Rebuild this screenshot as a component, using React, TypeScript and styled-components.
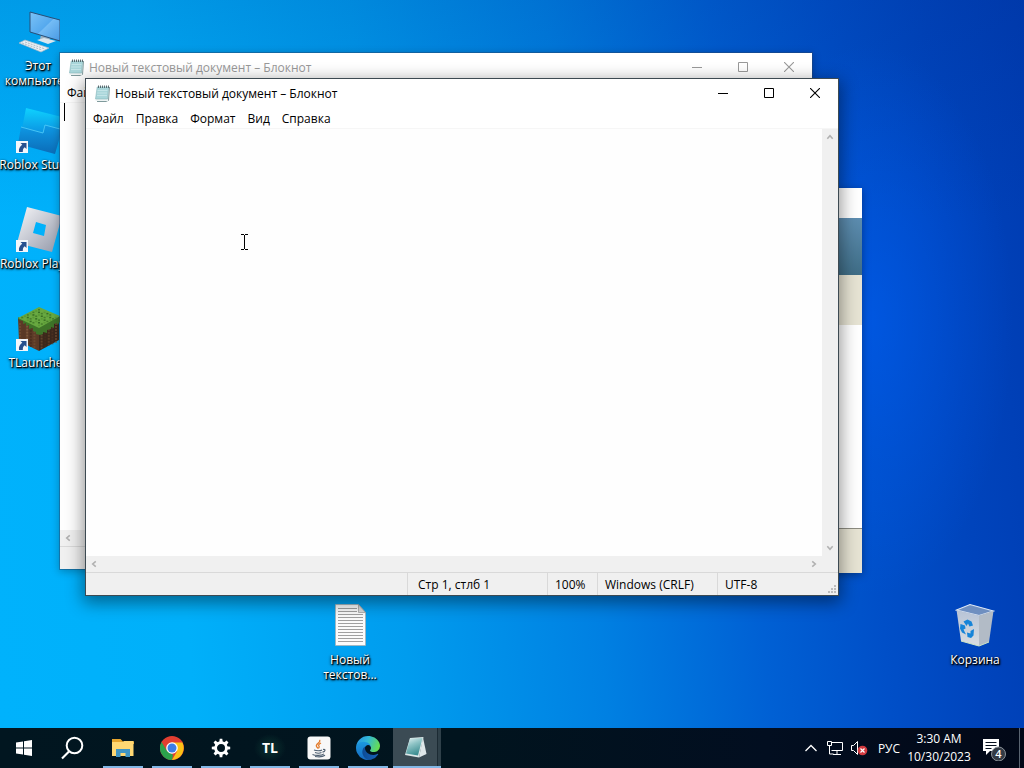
import React from "react";
import styled, { createGlobalStyle, css } from "styled-components";

const GlobalStyle = createGlobalStyle`
  *, *::before, *::after { box-sizing: border-box; }
  html, body { margin: 0; padding: 0; overflow: hidden; }
  body, button, textarea {
    font-family: "Open Sans", "Noto Sans", sans-serif;
    font-size: 12px;
  }
  button { margin: 0; padding: 0; border: 0; background: none; color: inherit; cursor: default; }
  svg { display: block; flex: none; }
`;

const Screen = styled.div`
  display: flex;
  flex-direction: column;
  height: 100vh;
  background: #0047b8;
`;

const Desktop = styled.main`
  position: relative;
  flex: 1;
  min-height: 0;
  overflow: hidden;
  background:
    radial-gradient(ellipse 14% 38% at 85% 44%, rgba(0, 98, 255, 0.45), rgba(0, 98, 255, 0) 100%),
    linear-gradient(to bottom, rgba(0, 40, 130, 0.16), rgba(0, 40, 130, 0) 30%),
    linear-gradient(85deg, #00b2fc 0%, #00b0fa 18%, #009cee 38%, #0080e2 56%, #0060d4 71%, #004fc8 82%, #0044bc 91%, #003cb2 100%);
`;

const iconShadow = css`
  text-shadow: 1px 1px 1px #000, 1px 1px 2px #000, 0 1px 3px rgba(0, 0, 0, 0.9);
`;

const Shortcut = styled.button<{ $x: number; $y: number }>`
  position: absolute;
  left: ${(p) => p.$x}px;
  top: ${(p) => p.$y}px;
  width: 74px;
  display: flex;
  flex-direction: column;
  align-items: center;
  gap: 3px;
  color: #fff;
  line-height: 15px;
  text-align: center;
  white-space: nowrap;
  ${iconShadow}
`;

const WindowFrame = styled.section<{ $x: number; $y: number; $active: boolean }>`
  position: absolute;
  left: ${(p) => p.$x}px;
  top: ${(p) => p.$y}px;
  width: 754px;
  height: 518px;
  display: flex;
  flex-direction: column;
  background: #fff;
  background-clip: padding-box;
  border: 1px solid ${(p) => (p.$active ? "#3d4a52" : "rgba(40, 70, 110, 0.45)")};
  box-shadow: ${(p) =>
    p.$active ? "0 5px 16px 2px rgba(0, 0, 0, 0.42)" : "0 2px 8px rgba(0, 0, 0, 0.25)"};
`;

const TitleBar = styled.header<{ $active: boolean }>`
  display: flex;
  align-items: center;
  height: 30px;
  padding-left: 8px;
  color: ${(p) => (p.$active ? "#000" : "#999")};
`;

const Title = styled.h1`
  flex: 1;
  margin: 0;
  padding-left: 4px;
  font-size: 12px;
  font-weight: 400;
  line-height: 16px;
  white-space: nowrap;
`;

const CaptionButton = styled.button`
  align-self: flex-start;
  width: 46px;
  height: 28px;
  display: flex;
  align-items: center;
  justify-content: center;
`;

const MenuBar = styled.nav`
  display: flex;
  height: 20px;
  padding-left: 1px;
  border-bottom: 1px solid #f6f6f6;
`;

const MenuItem = styled.button`
  padding: 0 6px;
  line-height: 19px;
  color: #000;
`;

const Editor = styled.div`
  flex: 1;
  display: flex;
  min-height: 0;
  position: relative;
`;

const TextBox = styled.textarea`
  flex: 1;
  min-width: 0;
  border: 0;
  outline: 0;
  resize: none;
  padding: 4px;
  background: #fefefe;
`;

const Caret = styled.span`
  position: absolute;
  left: 4px;
  top: 0;
  width: 1px;
  height: 18px;
  background: #000;
`;

const VerticalBar = styled.div`
  width: 16px;
  display: flex;
  flex-direction: column;
  justify-content: space-between;
  background: #f0f0f0;
`;

const HorizontalBar = styled.div`
  height: 16px;
  padding-right: 16px;
  display: flex;
  justify-content: space-between;
  background: #f0f0f0;
`;

const ScrollButton = styled.button`
  width: 16px;
  height: 16px;
  display: flex;
  align-items: center;
  justify-content: center;
`;

const StatusBar = styled.footer`
  display: flex;
  align-items: stretch;
  justify-content: flex-end;
  height: 23px;
  border-top: 1px solid #d9d9d9;
  background: #f0f0f0;
  position: relative;
`;

const StatusCell = styled.span<{ $width: number; $pad?: number }>`
  width: ${(p) => p.$width}px;
  padding-left: ${(p) => p.$pad ?? 7}px;
  border-left: 1px solid #d9d9d9;
  line-height: 23px;
  white-space: nowrap;
`;

const Grip = styled.svg`
  position: absolute;
  right: 1px;
  bottom: 1px;
`;

const InstallerFrame = styled.section`
  position: absolute;
  left: 362px;
  top: 188px;
  width: 500px;
  height: 385px;
  display: flex;
  flex-direction: column;
  background: #fff;
  box-shadow: 0 2px 8px rgba(0, 0, 0, 0.35);
`;

const InstallerTitle = styled.div`
  height: 30px;
`;
const InstallerBanner = styled.div`
  height: 57px;
  background: linear-gradient(to bottom, #5d8db0, #3f6d86);
`;
const InstallerHeading = styled.div`
  height: 50px;
  background: #e6e3d3;
`;
const InstallerBody = styled.div`
  flex: 1;
`;
const InstallerFooter = styled.div`
  height: 45px;
  border-top: 1px solid #8c8b80;
  background: #e6e3d3;
`;

const Pointer = styled.svg`
  position: absolute;
  left: 240px;
  top: 234px;
`;

const Taskbar = styled.footer`
  display: flex;
  height: 40px;
  background: linear-gradient(to right, #011620 0%, #01141e 45%, #020e20 75%, #020817 100%);
  color: #fff;
`;

const SystemButton = styled.button`
  width: 48px;
  display: flex;
  align-items: center;
  justify-content: center;
`;

const TaskList = styled.div`
  display: flex;
  gap: 1px;
  margin-left: 3px;
`;

const TaskButton = styled.button<{ $active?: boolean }>`
  width: 48px;
  display: flex;
  align-items: center;
  justify-content: center;
  background: ${(p) => (p.$active ? "#3b4b54" : "transparent")};
  position: relative;
  &::after {
    content: "";
    position: absolute;
    left: ${(p) => (p.$active ? 0 : 4)}px;
    right: ${(p) => (p.$active ? 0 : 4)}px;
    bottom: 0;
    height: 2px;
    background: #82b7e6;
  }
`;

const StackEdge = styled.span`
  position: absolute;
  right: 0;
  top: 0;
  bottom: 0;
  width: 4px;
  border-left: 1px solid #1c2b34;
  background: #2f4049;
`;

const Tray = styled.div`
  display: flex;
  align-items: center;
  margin-left: auto;
`;

const TrayButton = styled.button<{ $width: number }>`
  width: ${(p) => p.$width}px;
  height: 40px;
  display: flex;
  align-items: center;
  justify-content: center;
`;

const NoticeButton = styled(TrayButton)`
  justify-content: flex-start;
  padding-left: 8px;
`;

const Clock = styled.button`
  width: 68px;
  height: 40px;
  line-height: 18px;
  text-align: center;
  white-space: nowrap;
`;

const TrayEdge = styled.span`
  width: 5px;
  height: 40px;
  border-left: 1px solid #5a6470;
`;

const NotepadGlyph = () => (
  <svg width="17" height="18" viewBox="0 0 17 18">
    <path d="M4 2h12l-1 13.500-3 1.500H3z" fill="#7f9a9c" />
    <path d="M3.500 2h11.500l-1 14H1.500z" fill="#eef4f4" />
    <path d="M3.200 2h11.500l-1.200 12H1.500z" fill="#a9d6da" stroke="#86b6bb" strokeWidth=".6" />
    <path d="M3.500 5.500h10M3.200 8h10M3 10.500h10" stroke="#cbe9eb" strokeWidth=".8" />
    <path d="M4.500 .5v2.500M6.500 .5v2.500M8.500 .5v2.500M10.500 .5v2.500M12.500 .5v2.500M14.500 .5v2.500" stroke="#4e5f64" strokeWidth=".9" />
  </svg>
);

const Arrow = ({ turn }: { turn: number }) => (
  <svg width="8" height="8" viewBox="0 0 9 9">
    <path d="M1.500 6.500 4.500 3l3 3.500" fill="none" stroke="#b0b0b0" strokeWidth="1.700" transform={`rotate(${turn} 4.500 4.500)`} />
  </svg>
);

const ShortcutMark = () => (
  <g>
    <rect x="0" y="33" width="12" height="12" fill="#f3f7fb" />
    <path d="M4.500 35h6v6L8.700 39.200C7 40.500 6.800 41.500 6.800 44H3C2.500 40.500 4 38.500 6.300 36.800z" fill="#27518f" />
  </g>
);

const ComputerIcon = () => (
  <svg width="44" height="46" viewBox="0 0 44 46">
    <defs>
      <linearGradient id="pcScreen" x1="0" y1="0" x2="1" y2="1">
        <stop offset="0" stopColor="#7cc3f7" />
        <stop offset=".5" stopColor="#55a9ee" />
        <stop offset=".52" stopColor="#74bcf5" />
        <stop offset="1" stopColor="#4799e4" />
      </linearGradient>
    </defs>
    <path d="M25 26l9 3-1 4-9-3z" fill="#9eb2c2" />
    <path d="M21 31l7-2 12 3-8 3z" fill="#dbe6ee" />
    <path d="M14 3l30 8v21L14 23z" fill="url(#pcScreen)" stroke="#284e76" strokeWidth="1" />
    <path d="M3 34l6-3 24 8-8 4z" fill="#e9eff4" stroke="#a7b7c5" strokeWidth=".7" />
    <path d="M6 34l20 7M9 33l20 7" stroke="#a1adba" strokeWidth=".8" strokeDasharray="2 1" />
  </svg>
);

const StudioIcon = () => (
  <svg width="44" height="46" viewBox="0 0 44 46">
    <defs>
      <linearGradient id="studio" x1="0" y1="0" x2="0" y2="1">
        <stop offset="0" stopColor="#0fd2ff" />
        <stop offset="1" stopColor="#0a8fe0" />
      </linearGradient>
      <linearGradient id="studioLow" x1="0" y1="0" x2="0" y2="1">
        <stop offset="0" stopColor="#0f9ae6" />
        <stop offset="1" stopColor="#0b6cb8" />
      </linearGradient>
    </defs>
    <path d="M10 0l40 10-3 13-17-4-2 8-22-6z" fill="url(#studio)" />
    <path d="M5 19l22 6 2-8 17 5-7 24L2 36z" fill="url(#studioLow)" />
    <path d="M5 19l22 6 2-8 15 4" fill="none" stroke="#4cc8f7" strokeWidth=".9" />
    <ShortcutMark />
  </svg>
);

const PlayerIcon = () => (
  <svg width="44" height="46" viewBox="0 0 44 46">
    <defs>
      <linearGradient id="player" x1="0" y1="0" x2="1" y2="1">
        <stop offset="0" stopColor="#f7f7f9" />
        <stop offset=".5" stopColor="#c3c6d0" />
        <stop offset="1" stopColor="#8f95a6" />
      </linearGradient>
    </defs>
    <path fillRule="evenodd" d="M11 0L46 9 36 45 1 36zM20 15l-3 11 11 3 2-11z" fill="url(#player)" />
    <ShortcutMark />
  </svg>
);

const greens = ["#477d2b", "#6ba944", "#5b9736", "#386d23"];
const browns = ["#6e4930", "#4b2e1f", "#805a3d", "#593926"];

const GrassIcon = () => (
  <svg width="44" height="46" viewBox="0 0 44 46">
    <path d="M2 12l21 8v25L3 35z" fill="#5b3a27" />
    <path d="M23 20l20-8v22L23 45z" fill="#3c281c" />
    {Array.from({ length: 77 }, (_, i) => {
      const c = i % 11;
      const r = Math.floor(i / 11);
      const slope = c < 6 ? c * 1.300 : (10 - c) * 1.400;
      return <rect key={i} x={3 + c * 3.600} y={17 + slope + r * 3} width="2" height="2" fill={browns[(i * 7 + r * 3) % 4]} opacity={c < 6 ? 0.9 : 0.55} />;
    })}
    <path d="M2 11l21 9 21-10v6l-3 3v-2l-3 1v4l-3-1v2l-4 1v3l-4-1v2l-3 1-4-1v-2l-3-1v-3l-4 1v-4l-3 1v-3l-3 1v-3l-4-1z" fill="#3e7428" />
    <path d="M23 1l21 9-21 12L2 12z" fill="#66a83f" />
    {Array.from({ length: 49 }, (_, i) => {
      const c = i % 7;
      const r = Math.floor(i / 7);
      return <rect key={i} x={22 + (c - r) * 2.800} y={3 + (c + r) * 1.300} width="2" height="1.500" fill={greens[(i * 5 + r * 3) % 4]} />;
    })}
    <ShortcutMark />
  </svg>
);

const TextFileIcon = () => (
  <svg width="44" height="46" viewBox="0 0 44 46">
    <path d="M7.500 1.500h23l7 8v33h-30z" fill="#fbfbfb" stroke="#adadad" strokeWidth=".7" />
    <path d="M30.500 1.500v8h7z" fill="#d9d9d9" stroke="#999" strokeWidth=".7" />
    <path d="M10 5.500h19M10 8.500h19M10 11.500h25M10 14.500h25M10 17.500h25M10 20.500h25M10 23.500h25M10 26.500h25M10 29.500h25M10 32.500h25M10 35.500h25M10 38.500h25" stroke="#a0a0a0" />
  </svg>
);

const BinIcon = () => (
  <svg width="44" height="46" viewBox="0 0 44 46">
    <defs>
      <linearGradient id="binFront" x1="0" y1="0" x2="0" y2="1">
        <stop offset="0" stopColor="#b7c3d6" />
        <stop offset="1" stopColor="#d9dde1" />
      </linearGradient>
    </defs>
    <path d="M3.500 7L17 1.500 40.500 8 26 12.500z" fill="#6f8fc0" stroke="#dfe9f6" strokeWidth="1.100" />
    <path d="M3.500 7L26 12.500 26 43 8 38z" fill="url(#binFront)" />
    <path d="M26 12.500L40.500 8 36 39 26 43z" fill="#b2bbc6" />
    <path d="M8 38l18 5 10-4" fill="none" stroke="#cfe6c4" />
    <g fill="#1684d8">
      <path d="M10.500 18.500l4-2 4 2 1.500 4-3.500 1-1.500-3-1.500 2.500z" />
      <path d="M7.500 21l4.500 1.500.5 3-2 1 2.500 5-4-2-2-4z" />
      <path d="M14 29.500l3.500 1v-2.500l3.500-2-.5 6.500-2.500 2.500-3.500-1z" />
    </g>
  </svg>
);

const StartIcon = () => (
  <svg width="16" height="16" viewBox="0 0 16 16">
    <path d="M0 2.500l7-1v6.100H0zM8 1.300L16 0v7.600H8zM0 8.500h7v6l-7-1zM8 8.500h8V16l-8-1.200z" fill="#fff" />
  </svg>
);

const SearchIcon = () => (
  <svg width="24" height="24" viewBox="0 0 24 24">
    <circle cx="14.500" cy="9.500" r="7.800" fill="none" stroke="#fff" strokeWidth="2" />
    <path d="M9 15.500L2 22.500" stroke="#fff" strokeWidth="2.200" />
  </svg>
);

const ExplorerIcon = () => (
  <svg width="24" height="24" viewBox="0 0 24 24">
    <path d="M1 3h8.500l2.500 2.500h11V8H1z" fill="#e6a52e" />
    <path d="M1 6h11l1-1h9.500v15H1z" fill="#ffd873" />
    <path d="M5 13h14v8h-4.500v-4h-5v4H5z" fill="#4095c4" />
  </svg>
);

const ChromeIcon = () => (
  <svg width="24" height="24" viewBox="0 0 24 24">
    <circle cx="12" cy="12" r="12" fill="#e13e31" />
    <path d="M12 24A12 12 0 0 1 1.600 6L7 15l5 3 1 1z" fill="#2ba24c" />
    <path d="M12 24A12 12 0 0 0 22.400 6.600H12l5.200 8.400z" fill="#fbc116" />
    <circle cx="12" cy="12" r="5.800" fill="#fff" />
    <circle cx="12" cy="12" r="4.500" fill="#3c7de6" />
  </svg>
);

const SettingsIcon = () => (
  <svg width="20" height="20" viewBox="0 0 20 20">
    <circle cx="10" cy="10" r="5.400" fill="none" stroke="#fff" strokeWidth="2.800" />
    {[0, 45, 90, 135, 180, 225, 270, 315].map((a) => (
      <path key={a} d="M8.200 4.500L8.700 .8h2.600l.5 3.700z" fill="#fff" transform={`rotate(${a} 10 10)`} />
    ))}
  </svg>
);

const LauncherIcon = styled.span`
  width: 32px;
  height: 28px;
  background: radial-gradient(closest-side, #0a3330, rgba(8, 43, 43, 0));
  font-size: 14px;
  font-weight: 700;
  line-height: 28px;
  text-align: center;
`;

const JavaIcon = () => (
  <svg width="24" height="24" viewBox="0 0 24 24">
    <rect x=".5" y=".5" width="23" height="23" rx="3" fill="#f8f8f8" />
    <path d="M12.500 4c2 2.500-4.500 4-3 6.500.4 1 1.500 1.600 1.800 2M14 7c-2 1-3 2-2 3.200.7 1 0 1.500-.5 2" fill="none" stroke="#e37b2c" strokeWidth="1.300" />
    <path d="M7 14c2.500 1 6.500 1 8 0M8 16.500c2 .8 5 .8 6.500 0M16 13.500c3-.8 2.500 2-.5 2.600M5.500 18.500c3 1.300 9 1.300 11.500-.6M8 20.500c4 .7 8 .3 10-1.200" fill="none" stroke="#4f6072" strokeWidth="1.100" />
  </svg>
);

const EdgeIcon = () => (
  <svg width="24" height="24" viewBox="0 0 256 256">
    <defs>
      <linearGradient id="edgeTop" x1="0" y1=".2" x2="1" y2=".5">
        <stop offset="0" stopColor="#2793e4" />
        <stop offset=".45" stopColor="#31b8d8" />
        <stop offset="1" stopColor="#66dd52" />
      </linearGradient>
      <linearGradient id="edgeBody" x1="0" y1="0" x2="0" y2="1">
        <stop offset="0" stopColor="#1b9de2" />
        <stop offset="1" stopColor="#1668bf" />
      </linearGradient>
      <linearGradient id="edgeLow" x1="0" y1="0" x2="1" y2="0">
        <stop offset="0" stopColor="#0c4a93" />
        <stop offset="1" stopColor="#1762bb" />
      </linearGradient>
    </defs>
    <g transform="translate(-4.630 -4.920)">
      <path d="M235.680 195.460a93.730 93.730 0 0 1-10.540 4.710 101.870 101.870 0 0 1-35.900 6.460c-47.320 0-88.540-32.550-88.540-74.320A31.480 31.480 0 0 1 117.130 105c-42.800 1.800-53.800 46.400-53.800 72.530 0 73.880 68.090 81.370 82.760 81.370 7.910 0 19.840-2.300 27-4.560l1.310-.44a128.340 128.340 0 0 0 66.600-52.800 4 4 0 0 0-5.320-5.640Z" fill="url(#edgeLow)" />
      <path d="M110.340 246.340A79.200 79.200 0 0 1 87.600 225a80.720 80.720 0 0 1 29.530-120c3.120-1.470 8.450-4.130 15.540-4a32.350 32.350 0 0 1 25.690 13 31.880 31.880 0 0 1 6.360 18.660c0-.21 24.460-79.600-80-79.600-43.900 0-80 41.660-80 78.210a130.150 130.150 0 0 0 12.110 56 128 128 0 0 0 156.380 67.110 75.550 75.550 0 0 1-62.780-8Z" fill="url(#edgeBody)" />
    </g>
    <path d="M152.330 148.860c-.81 1.050-3.300 2.500-3.300 5.660 0 2.610 1.700 5.120 4.720 7.230 14.380 10 41.490 8.680 41.560 8.680a59.560 59.560 0 0 0 30.270-8.350A61.380 61.380 0 0 0 256 109.170c.26-22.410-8-37.310-11.340-43.910C223.460 23.840 177.720 0 128 0A128 128 0 0 0 0 126.200c.48-36.540 36.800-66.050 80-66.050 3.500 0 23.460.34 42 10.070 16.340 8.580 24.900 18.940 30.850 29.210 6.180 10.670 7.280 24.150 7.280 29.520s-2.740 13.330-7.800 19.910Z" fill="url(#edgeTop)" />
  </svg>
);

const TaskNotepadIcon = () => (
  <svg width="24" height="24" viewBox="0 0 24 24">
    <defs>
      <linearGradient id="noteTask" x1="0" y1="0" x2=".4" y2="1">
        <stop offset="0" stopColor="#e3f2f2" />
        <stop offset=".45" stopColor="#8dc3c5" />
        <stop offset="1" stopColor="#3f8f93" />
      </linearGradient>
    </defs>
    <path d="M18 1.500L21.500 18 14 21.500z" fill="#dfe7e9" />
    <path d="M5 2l13.500-1L14 21.500 0 19z" fill="#dce8e9" />
    <path d="M5 2.500L17.500 2 13 19.500 1 17.500z" fill="url(#noteTask)" />
  </svg>
);

const ChevronIcon = () => (
  <svg width="14" height="8" viewBox="0 0 14 8">
    <path d="M1.500 7L7 1.500 12.500 7" fill="none" stroke="#fff" strokeWidth="1.300" />
  </svg>
);

const NetworkIcon = () => (
  <svg width="18" height="16" viewBox="0 0 18 16">
    <path d="M5.500 2.500h11v8h-11M11 10.500v4M7 14.500h8M1.500 1.500h4v4h-4zM3.500 5.500v8.500h4" fill="none" stroke="#fff" />
  </svg>
);

const VolumeIcon = () => (
  <svg width="18" height="16" viewBox="0 0 18 16">
    <path d="M1.500 5.500h2l4-4v13l-4-4h-2z" fill="none" stroke="#fff" />
    <circle cx="12.500" cy="10.500" r="4.800" fill="#d33a3f" />
    <path d="M10.500 8.500l4 4M14.500 8.500l-4 4" stroke="#fff" strokeWidth="1.200" />
  </svg>
);

const ActionCenterIcon = () => (
  <svg width="26" height="26" viewBox="0 0 26 26">
    <path d="M2 4h16v12H9l-4 4v-4H2z" fill="#fff" />
    <path d="M4.500 7.500h11M4.500 10.500h11M4.500 13.500h6" stroke="#07101f" />
    <circle cx="17.500" cy="19" r="7" fill="#343b45" stroke="#8b9299" />
    <text x="17.500" y="23" textAnchor="middle" fontFamily="Open Sans" fontSize="11" fontWeight="600" fill="#fff">4</text>
  </svg>
);

const menus = ["Файл", "Правка", "Формат", "Вид", "Справка"];

const statusCells = [
  { text: "Стр 1, стлб 1", width: 140, pad: 10 },
  { text: "100%", width: 50 },
  { text: "Windows (CRLF)", width: 120 },
  { text: "UTF-8", width: 121 },
];

type NotepadProps = { x: number; y: number; active: boolean };

const NotepadWindow = ({ x, y, active }: NotepadProps) => (
  <WindowFrame $x={x} $y={y} $active={active} aria-label="Блокнот">
    <TitleBar $active={active}>
      <NotepadGlyph />
      <Title>Новый текстовый документ – Блокнот</Title>
      <CaptionButton aria-label="Свернуть">
        <svg width="10" height="10" viewBox="0 0 10 10">
          <path d="M0 5.500h10" stroke="currentColor" />
        </svg>
      </CaptionButton>
      <CaptionButton aria-label="Развернуть">
        <svg width="10" height="10" viewBox="0 0 10 10">
          <path d="M.5.5h9v9h-9z" fill="none" stroke="currentColor" />
        </svg>
      </CaptionButton>
      <CaptionButton aria-label="Закрыть">
        <svg width="10" height="10" viewBox="0 0 10 10">
          <path d="M0 0l10 10M10 0L0 10" stroke="currentColor" strokeWidth="1.100" />
        </svg>
      </CaptionButton>
    </TitleBar>
    <MenuBar>
      {(active ? menus : menus.slice(0, 1)).map((m) => (
        <MenuItem key={m}>{m}</MenuItem>
      ))}
    </MenuBar>
    <Editor>
      <TextBox aria-label="Текст документа" spellCheck={false} />
      {!active && <Caret />}
      <VerticalBar>
        <ScrollButton aria-label="Вверх"><Arrow turn={0} /></ScrollButton>
        <ScrollButton aria-label="Вниз"><Arrow turn={180} /></ScrollButton>
      </VerticalBar>
    </Editor>
    <HorizontalBar>
      <ScrollButton aria-label="Влево"><Arrow turn={270} /></ScrollButton>
      <ScrollButton aria-label="Вправо"><Arrow turn={90} /></ScrollButton>
    </HorizontalBar>
    <StatusBar>
      {active &&
        statusCells.map((c) => (
          <StatusCell key={c.text} $width={c.width} $pad={c.pad}>{c.text}</StatusCell>
        ))}
      <Grip width="10" height="10" viewBox="0 0 10 10">
        <path d="M7 1h2v2H7zM4 4h2v2H4zM7 4h2v2H7zM1 7h2v2H1zM4 7h2v2H4zM7 7h2v2H7z" fill="#bdbdbd" />
      </Grip>
    </StatusBar>
  </WindowFrame>
);

const tasks = [
  { name: "Проводник", icon: <ExplorerIcon /> },
  { name: "Chrome", icon: <ChromeIcon /> },
  { name: "Параметры", icon: <SettingsIcon /> },
  { name: "TLauncher", icon: <LauncherIcon>TL</LauncherIcon> },
  { name: "Java", icon: <JavaIcon /> },
  { name: "Edge", icon: <EdgeIcon /> },
];

export default function App() {
  return (
    <Screen>
      <GlobalStyle />
      <Desktop>
        <Shortcut $x={1} $y={9}>
          <ComputerIcon />
          <span>Этот<br />компьютер</span>
        </Shortcut>
        <Shortcut $x={1} $y={108}>
          <StudioIcon />
          <span>Roblox Studio</span>
        </Shortcut>
        <Shortcut $x={1} $y={207}>
          <PlayerIcon />
          <span>Roblox Player</span>
        </Shortcut>
        <Shortcut $x={1} $y={306}>
          <GrassIcon />
          <span>TLauncher</span>
        </Shortcut>
        <Shortcut $x={313} $y={603}>
          <TextFileIcon />
          <span>Новый<br />текстов...</span>
        </Shortcut>
        <Shortcut $x={938} $y={603}>
          <BinIcon />
          <span>Корзина</span>
        </Shortcut>

        <InstallerFrame aria-label="Java">
          <InstallerTitle />
          <InstallerBanner />
          <InstallerHeading />
          <InstallerBody />
          <InstallerFooter />
        </InstallerFrame>
        <NotepadWindow x={59} y={52} active={false} />
        <NotepadWindow x={85} y={78} active />
        <Pointer width="9" height="16" viewBox="0 0 9 16">
          <path d="M1 .5h3M5 .5h3M4.500 1v14M1 15.500h3M5 15.500h3" stroke="#000" fill="none" />
        </Pointer>
      </Desktop>

      <Taskbar>
        <SystemButton aria-label="Пуск"><StartIcon /></SystemButton>
        <SystemButton aria-label="Поиск"><SearchIcon /></SystemButton>
        <TaskList>
          {tasks.map((t) => (
            <TaskButton key={t.name} aria-label={t.name}>{t.icon}</TaskButton>
          ))}
          <TaskButton $active aria-label="Блокнот">
            <TaskNotepadIcon />
            <StackEdge />
          </TaskButton>
        </TaskList>
        <Tray>
          <TrayButton $width={28} aria-label="Скрытые значки"><ChevronIcon /></TrayButton>
          <TrayButton $width={20} aria-label="Сеть"><NetworkIcon /></TrayButton>
          <TrayButton $width={28} aria-label="Громкость"><VolumeIcon /></TrayButton>
          <TrayButton $width={32}>РУС</TrayButton>
          <Clock>3:30 AM<br />10/30/2023</Clock>
          <NoticeButton $width={46} aria-label="Уведомления"><ActionCenterIcon /></NoticeButton>
          <TrayEdge />
        </Tray>
      </Taskbar>
    </Screen>
  );
}
